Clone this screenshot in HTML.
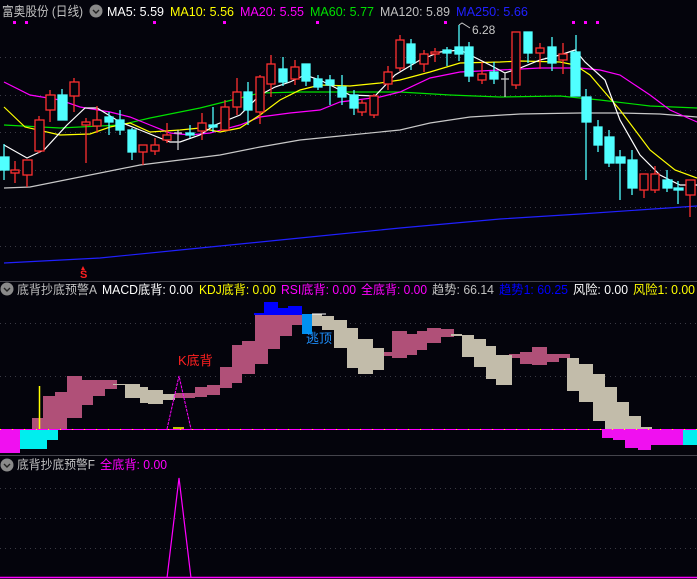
<!DOCTYPE html>
<html><head><meta charset="utf-8"><style>
html,body{margin:0;padding:0;background:#04040c;}
svg{display:block;}
text{font-family:"Liberation Sans","Noto Sans CJK SC",sans-serif;}
</style></head><body>
<svg width="697" height="579" viewBox="0 0 697 579" xmlns="http://www.w3.org/2000/svg">
<rect width="697" height="579" fill="#04040c"/>
<g stroke="#3a3a44" stroke-width="1" stroke-dasharray="1,4">
<line x1="0" y1="57.5" x2="697" y2="57.5"/><line x1="0" y1="95.5" x2="697" y2="95.5"/>
<line x1="0" y1="132.5" x2="697" y2="132.5"/><line x1="0" y1="170.5" x2="697" y2="170.5"/>
<line x1="0" y1="207.5" x2="697" y2="207.5"/><line x1="0" y1="246.5" x2="697" y2="246.5"/>
<line x1="0" y1="323.5" x2="697" y2="323.5"/><line x1="0" y1="376.5" x2="697" y2="376.5"/>
<line x1="0" y1="488.5" x2="697" y2="488.5"/><line x1="0" y1="518.5" x2="697" y2="518.5"/><line x1="0" y1="548.5" x2="697" y2="548.5"/>
</g>
<line x1="0" y1="281.5" x2="697" y2="281.5" stroke="#44444c"/>
<line x1="0" y1="455.5" x2="697" y2="455.5" stroke="#44444c"/>

<g fill="none" stroke-width="1.2">
<polyline stroke="#2020ff" points="4,263 100,258 200,248 300,238 400,228 500,219 580,214 697,206"/>
<polyline stroke="#c8c8c8" points="4,188 30,187 60,181 100,173 140,165 180,160 220,155 260,147 300,140 340,136 400,130 430,123 470,117 520,114 580,113 620,113 660,114 697,117"/>
<polyline stroke="#00e000" points="4,125 60,128 120,125 150,118 200,108 240,98 260,93 300,92 400,92 450,95 500,97 560,96 600,100 650,106 697,108"/>
<polyline stroke="#ff00ff" points="4,82 30,95 60,100 80,107 110,112 130,117 150,125 170,133 190,135 210,133 240,125 260,117 290,113 320,110 340,102 380,97 400,92 430,78 460,72 500,70 540,68 580,68 600,70 620,75 650,95 670,110 697,122"/>
<polyline stroke="#ffff00" points="4,107 25,127 60,135 90,134 110,127 130,123 150,132 180,130 200,128 220,132 240,128 260,115 280,100 300,90 320,85 350,86 380,83 400,80 430,72 460,63 500,62 520,61 560,62 575,65 590,75 620,110 650,150 675,170 697,178"/>
<polyline stroke="#ffffff" points="4,145 27,158 44,150 67,125 85,108 97,108 120,122 140,130 170,142 180,142 200,135 215,125 240,115 260,95 275,87 290,82 305,75 320,80 330,85 350,95 375,96 395,75 420,60 440,52 460,50 490,65 505,73 520,68 540,60 560,55 575,50 585,62 605,80 620,120 640,155 660,175 680,185 697,185"/>
</g>

<g stroke="#ff3030" stroke-width="1.3" fill="#04040c">
<line x1="15" y1="161" x2="15" y2="183"/><rect x="11" y="170" width="8" height="3"/>
<line x1="27" y1="160" x2="27" y2="187"/><rect x="23" y="160" width="9" height="15"/>
<line x1="39" y1="116" x2="39" y2="153"/><rect x="35" y="120" width="9" height="31"/>
<line x1="50" y1="90" x2="50" y2="122"/><rect x="46" y="95" width="9" height="15"/>
<line x1="74" y1="78" x2="74" y2="112"/><rect x="70" y="82" width="9" height="14"/>
<line x1="86" y1="118" x2="86" y2="163"/><rect x="82" y="122" width="8" height="3"/>
<line x1="97" y1="106" x2="97" y2="133"/><rect x="93" y="120" width="8" height="6"/>
<line x1="143" y1="145" x2="143" y2="165"/><rect x="139" y="145" width="8" height="7"/>
<line x1="155" y1="138" x2="155" y2="155"/><rect x="151" y="145" width="8" height="6"/>
<line x1="167" y1="123" x2="167" y2="143"/><rect x="163" y="135" width="8" height="5"/>
<line x1="202" y1="113" x2="202" y2="140"/><rect x="198" y="123" width="8" height="8"/>
<line x1="225" y1="100" x2="225" y2="130"/><rect x="221" y="107" width="8" height="23"/>
<line x1="237" y1="78" x2="237" y2="115"/><rect x="233" y="92" width="8" height="15"/>
<line x1="260" y1="75" x2="260" y2="124"/><rect x="256" y="77" width="8" height="35"/>
<line x1="271" y1="55" x2="271" y2="97"/><rect x="267" y="64" width="8" height="20"/>
<line x1="295" y1="60" x2="295" y2="85"/><rect x="291" y="67" width="8" height="12"/>
<line x1="362" y1="100" x2="362" y2="116"/><rect x="358" y="103" width="8" height="9"/>
<line x1="374" y1="94" x2="374" y2="118"/><rect x="370" y="96" width="8" height="19"/>
<line x1="388" y1="66" x2="388" y2="90"/><rect x="384" y="72" width="8" height="12"/>
<line x1="400" y1="35" x2="400" y2="71"/><rect x="396" y="40" width="8" height="28"/>
<line x1="424" y1="50" x2="424" y2="72"/><rect x="420" y="54" width="8" height="10"/>
<line x1="435" y1="48" x2="435" y2="62"/><rect x="431" y="52" width="8" height="2"/>
<line x1="482" y1="62" x2="482" y2="84"/><rect x="478" y="74" width="8" height="6"/>
<line x1="516" y1="32" x2="516" y2="89"/><rect x="512" y="32" width="8" height="53"/>
<line x1="540" y1="43" x2="540" y2="69"/><rect x="536" y="48" width="8" height="5"/>
<line x1="563" y1="43" x2="563" y2="74"/><rect x="559" y="54" width="8" height="6"/>
<line x1="644" y1="174" x2="644" y2="198"/><rect x="640" y="174" width="8" height="16"/>
<line x1="655" y1="166" x2="655" y2="193"/><rect x="651" y="174" width="8" height="16"/>
<line x1="690" y1="180" x2="690" y2="217"/><rect x="686" y="180" width="9" height="15"/>
</g>
<g stroke="#50ffff" stroke-width="1.3" fill="#50ffff">
<line x1="4" y1="144" x2="4" y2="180"/><rect x="0" y="157" width="9" height="13"/>
<line x1="62" y1="89" x2="62" y2="120"/><rect x="58" y="95" width="9" height="25"/>
<line x1="109" y1="112" x2="109" y2="135"/><rect x="105" y="117" width="8" height="5"/>
<line x1="120" y1="110" x2="120" y2="135"/><rect x="116" y="120" width="8" height="10"/>
<line x1="132" y1="128" x2="132" y2="160"/><rect x="128" y="130" width="8" height="22"/>
<line x1="190" y1="125" x2="190" y2="138"/><rect x="186" y="133" width="8" height="2"/>
<line x1="213" y1="107" x2="213" y2="132"/><rect x="209" y="125" width="8" height="2"/>
<line x1="248" y1="82" x2="248" y2="125"/><rect x="244" y="92" width="8" height="18"/>
<line x1="283" y1="57" x2="283" y2="86"/><rect x="279" y="69" width="8" height="13"/>
<line x1="306" y1="64" x2="306" y2="86"/><rect x="302" y="64" width="8" height="17"/>
<line x1="318" y1="75" x2="318" y2="90"/><rect x="314" y="79" width="8" height="8"/>
<line x1="330" y1="75" x2="330" y2="105"/><rect x="326" y="80" width="8" height="5"/>
<line x1="342" y1="75" x2="342" y2="105"/><rect x="338" y="87" width="8" height="10"/>
<line x1="354" y1="90" x2="354" y2="115"/><rect x="350" y="95" width="8" height="13"/>
<line x1="411" y1="39" x2="411" y2="70"/><rect x="407" y="44" width="8" height="19"/>
<line x1="447" y1="47" x2="447" y2="66"/><rect x="443" y="50" width="8" height="3"/>
<line x1="459" y1="25" x2="459" y2="61"/><rect x="455" y="47" width="8" height="7"/>
<line x1="469" y1="42" x2="469" y2="82"/><rect x="465" y="47" width="8" height="29"/>
<line x1="494" y1="62" x2="494" y2="84"/><rect x="490" y="72" width="8" height="7"/>
<line x1="528" y1="32" x2="528" y2="63"/><rect x="524" y="32" width="8" height="21"/>
<line x1="552" y1="37" x2="552" y2="71"/><rect x="548" y="47" width="8" height="16"/>
<line x1="576" y1="35" x2="576" y2="96"/><rect x="571" y="52" width="9" height="44"/>
<line x1="586" y1="89" x2="586" y2="180"/><rect x="582" y="97" width="9" height="25"/>
<line x1="598" y1="120" x2="598" y2="152"/><rect x="594" y="127" width="8" height="18"/>
<line x1="609" y1="130" x2="609" y2="167"/><rect x="605" y="137" width="9" height="26"/>
<line x1="620" y1="150" x2="620" y2="200"/><rect x="616" y="157" width="9" height="6"/>
<line x1="632" y1="150" x2="632" y2="195"/><rect x="628" y="160" width="9" height="28"/>
<line x1="667" y1="170" x2="667" y2="192"/><rect x="663" y="180" width="9" height="8"/>
<line x1="678" y1="181" x2="678" y2="204"/><rect x="674" y="188" width="9" height="2"/>
</g>
<g stroke="#c8c8c8" stroke-width="1.3">
<line x1="178" y1="130" x2="178" y2="150"/><line x1="174" y1="133" x2="182" y2="133"/>
<line x1="505" y1="72" x2="505" y2="97"/><line x1="501" y1="79" x2="509" y2="79"/>
</g>
<polyline points="459,25 462,23 470,28" fill="none" stroke="#c8c8c8"/>
<text x="472" y="34" font-size="12" fill="#c8c8c8">6.28</text>
<g fill="#ff00ff">
<rect x="13" y="21" width="3" height="3"/><rect x="25" y="21" width="3" height="3"/><rect x="153" y="21" width="3" height="3"/>
<rect x="223" y="21" width="3" height="3"/><rect x="316" y="21" width="3" height="3"/><rect x="444" y="21" width="3" height="3"/>
<rect x="572" y="21" width="3" height="3"/><rect x="584" y="21" width="3" height="3"/><rect x="596" y="21" width="3" height="3"/>
</g>
<text x="80" y="278" font-size="11" font-weight="bold" fill="#ff2020">S</text>
<polygon points="83,266 81,270 85,270" fill="#ff2020"/>

<g font-size="13" lengthAdjust="spacingAndGlyphs">
<text x="2" y="16" fill="#c0c0c0" textLength="81" lengthAdjust="spacingAndGlyphs">富奥股份 (日线)</text>
<circle cx="96" cy="11" r="6.5" fill="#8a8a8a"/>
<polyline points="93,10 96,13 99,10" fill="none" stroke="#222" stroke-width="1.4"/>
<text x="107" y="16" fill="#ffffff" textLength="57" lengthAdjust="spacingAndGlyphs">MA5: 5.59</text>
<text x="170" y="16" fill="#ffff00" textLength="64" lengthAdjust="spacingAndGlyphs">MA10: 5.56</text>
<text x="240" y="16" fill="#ff00ff" textLength="64" lengthAdjust="spacingAndGlyphs">MA20: 5.55</text>
<text x="310" y="16" fill="#00e000" textLength="64" lengthAdjust="spacingAndGlyphs">MA60: 5.77</text>
<text x="380" y="16" fill="#c0c0c0" textLength="70" lengthAdjust="spacingAndGlyphs">MA120: 5.89</text>
<text x="456" y="16" fill="#2020ff" textLength="72" lengthAdjust="spacingAndGlyphs">MA250: 5.66</text>
</g>

<g fill="#b05078">
<rect x="32" y="418" width="11" height="11"/><rect x="43" y="396" width="12" height="33"/><rect x="55" y="392" width="12" height="37"/>
<rect x="67" y="376" width="15" height="42"/><rect x="82" y="380" width="11" height="25"/><rect x="93" y="380" width="12" height="16"/><rect x="105" y="380" width="12" height="9"/>
<rect x="175" y="393" width="20" height="5"/><rect x="195" y="387" width="12" height="10"/><rect x="207" y="385" width="13" height="10"/>
<rect x="220" y="367" width="12" height="21"/><rect x="232" y="345" width="10" height="38"/><rect x="242" y="341" width="13" height="33"/>
<rect x="255" y="315" width="13" height="49"/><rect x="268" y="315" width="12" height="34"/><rect x="280" y="315" width="12" height="21"/><rect x="292" y="315" width="10" height="10"/>
<rect x="384" y="352" width="8" height="4"/><rect x="392" y="331" width="15" height="27"/><rect x="407" y="334" width="10" height="21"/><rect x="417" y="331" width="10" height="19"/><rect x="427" y="328" width="14" height="15"/><rect x="441" y="329" width="13" height="8"/>
<rect x="509" y="354" width="11" height="4"/><rect x="520" y="352" width="12" height="12"/><rect x="532" y="347" width="15" height="18"/><rect x="547" y="354" width="12" height="8"/><rect x="559" y="354" width="11" height="4"/>
</g>
<g fill="#c2bcaa">
<rect x="113" y="384" width="12" height="1"/><rect x="125" y="384" width="15" height="14"/><rect x="140" y="387" width="8" height="16"/><rect x="148" y="390" width="15" height="14"/><rect x="163" y="394" width="12" height="6"/>
<rect x="312" y="314" width="10" height="12"/><rect x="322" y="316" width="12" height="14"/><rect x="334" y="320" width="13" height="28"/><rect x="347" y="328" width="11" height="40"/><rect x="358" y="339" width="15" height="35"/><rect x="373" y="348" width="11" height="22"/>
<rect x="451" y="334" width="11" height="2"/><rect x="462" y="335" width="12" height="22"/><rect x="474" y="339" width="12" height="28"/><rect x="486" y="346" width="10" height="33"/><rect x="496" y="355" width="16" height="30"/>
<rect x="567" y="358" width="12" height="33"/><rect x="579" y="364" width="14" height="38"/><rect x="593" y="374" width="12" height="47"/><rect x="605" y="387" width="12" height="42"/><rect x="617" y="402" width="12" height="27"/><rect x="629" y="416" width="12" height="13"/><rect x="641" y="427" width="11" height="2"/>
</g>
<g fill="#0000ff">
<rect x="254" y="313" width="48" height="2"/><rect x="264" y="302" width="14" height="13"/><rect x="278" y="308" width="10" height="7"/><rect x="288" y="306" width="14" height="9"/>
</g>
<rect x="302" y="314" width="10" height="20" fill="#0090f0"/>
<line x1="312" y1="314" x2="326" y2="314" stroke="#fff"/>
<g fill="#f010f0">
<rect x="0" y="429" width="20" height="24"/><rect x="602" y="429" width="11" height="9"/><rect x="613" y="429" width="12" height="11"/><rect x="625" y="429" width="13" height="19"/><rect x="638" y="429" width="13" height="21"/><rect x="651" y="429" width="32" height="16"/>
</g>
<g fill="#00eeee">
<rect x="20" y="429" width="27" height="20"/><rect x="47" y="429" width="11" height="11"/><rect x="683" y="429" width="14" height="16"/>
</g>
<line x1="0" y1="429.5" x2="697" y2="429.5" stroke="#ff00ff"/>
<line x1="0" y1="429.5" x2="697" y2="429.5" stroke="#ffff00" stroke-dasharray="1,11"/>
<line x1="39.5" y1="386" x2="39.5" y2="429" stroke="#ffff00" stroke-width="1.5"/>
<line x1="173" y1="428" x2="184" y2="428" stroke="#ffff00" stroke-width="1.5"/>
<polyline points="167,429 179,376 191,429" fill="none" stroke="#ff00ff" stroke-dasharray="3,1"/>
<text x="178" y="365" font-size="13" fill="#ff2020">K底背</text>
<text x="306" y="343" font-size="13" fill="#1e90ff">逃顶</text>

<circle cx="7" cy="289" r="6.5" fill="#8a8a8a"/>
<polyline points="4,288 7,291 10,288" fill="none" stroke="#222" stroke-width="1.4"/>
<g font-size="12.5">
<text x="17" y="294" fill="#c0c0c0" textLength="80" lengthAdjust="spacingAndGlyphs">底背抄底预警A</text>
<text x="102" y="294" fill="#ffffff" textLength="91" lengthAdjust="spacingAndGlyphs">MACD底背: 0.00</text>
<text x="199" y="294" fill="#ffff00" textLength="77" lengthAdjust="spacingAndGlyphs">KDJ底背: 0.00</text>
<text x="281" y="294" fill="#ff00ff" textLength="75" lengthAdjust="spacingAndGlyphs">RSI底背: 0.00</text>
<text x="361" y="294" fill="#ff00ff" textLength="66" lengthAdjust="spacingAndGlyphs">全底背: 0.00</text>
<text x="432" y="294" fill="#c0c0c0" textLength="62" lengthAdjust="spacingAndGlyphs">趋势: 66.14</text>
<text x="499" y="294" fill="#0000ff" textLength="69" lengthAdjust="spacingAndGlyphs">趋势1: 60.25</text>
<text x="573" y="294" fill="#ffffff" textLength="55" lengthAdjust="spacingAndGlyphs">风险: 0.00</text>
<text x="633" y="294" fill="#ffff00" textLength="62" lengthAdjust="spacingAndGlyphs">风险1: 0.00</text>
</g>

<circle cx="7" cy="465" r="6.5" fill="#8a8a8a"/>
<polyline points="4,464 7,467 10,464" fill="none" stroke="#222" stroke-width="1.4"/>
<g font-size="12.5">
<text x="17" y="469" fill="#c0c0c0" textLength="78" lengthAdjust="spacingAndGlyphs">底背抄底预警F</text>
<text x="100" y="469" fill="#ff00ff" textLength="67" lengthAdjust="spacingAndGlyphs">全底背: 0.00</text>
</g>
<polyline points="167,578 179,478 191,578" fill="none" stroke="#ff00ff" stroke-width="1.2"/>
<line x1="0" y1="577.5" x2="697" y2="577.5" stroke="#ff00ff" stroke-width="1.5"/>
</svg>
</body></html>
